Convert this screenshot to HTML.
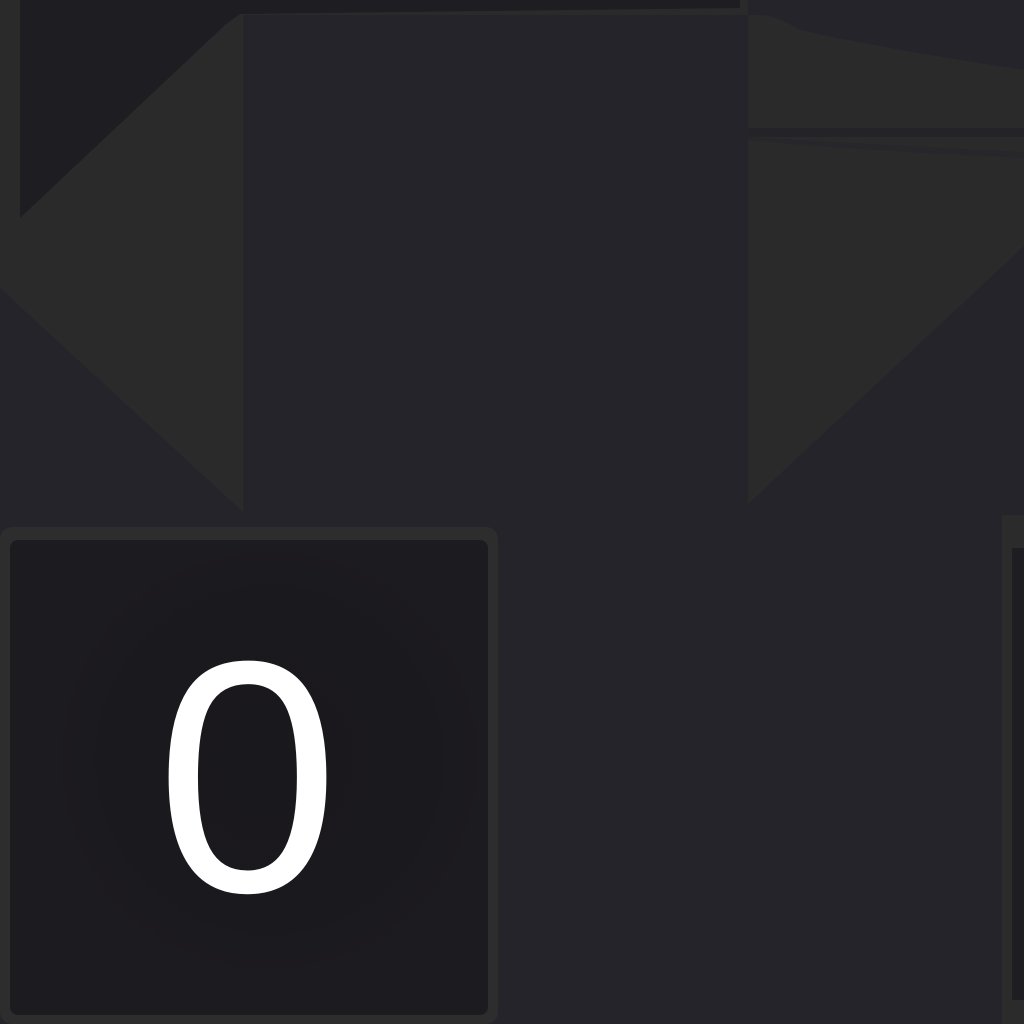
<!DOCTYPE html>
<html><head><meta charset="utf-8"><style>
html,body{margin:0;padding:0;width:1024px;height:1024px;overflow:hidden;background:#2a2a2a}
svg{position:absolute;left:0;top:0}
.t{position:absolute;left:0;top:530px;width:495px;height:494px;display:flex;align-items:center;justify-content:center;font-family:"Liberation Sans",sans-serif;font-size:330px;color:#fff;line-height:1}
</style></head><body>
<svg width="1024" height="1024" viewBox="0 0 1024 1024">
<defs>
<radialGradient id="g" cx="270" cy="760" r="220" gradientUnits="userSpaceOnUse">
<stop offset="0" stop-color="#19181c"/><stop offset="0.7" stop-color="#1a191d"/><stop offset="1" stop-color="#1c1b20"/>
</radialGradient>
</defs>
<rect width="1024" height="1024" fill="#2a2a2a"/>
<polygon points="20,0 740,0 740,8 240,14 225,25 20,218" fill="#1e1d22"/>
<polygon points="0,288 243,512 243,1024 0,1024" fill="#26242b"/>
<path d="M243,15 L748,15 L748,1024 L243,1024 Z" fill="#26242b"/>
<path d="M748,0 L1024,0 L1024,70 Q880,48 800,30 Q780,18 765,15 L748,15 Z" fill="#26242b"/>
<rect x="748" y="128" width="276" height="9" fill="#242328"/>
<path d="M748,140 Q850,150 1024,158 L1024,152 Q900,146 748,137 Z" fill="#27262a"/>
<polygon points="1024,246 1024,1024 748,1024 748,504" fill="#26242b"/>
<rect x="1002" y="515" width="22" height="509" fill="#2b2b2b"/>
<rect x="1012" y="548" width="12" height="452" fill="#1e1d22"/>
<rect x="0" y="527" width="498" height="497" rx="12" fill="#2d2d2d"/>
<rect x="10" y="540" width="478" height="475" rx="8" fill="url(#g)"/>
</svg>
<div class="t">0</div>
</body></html>
